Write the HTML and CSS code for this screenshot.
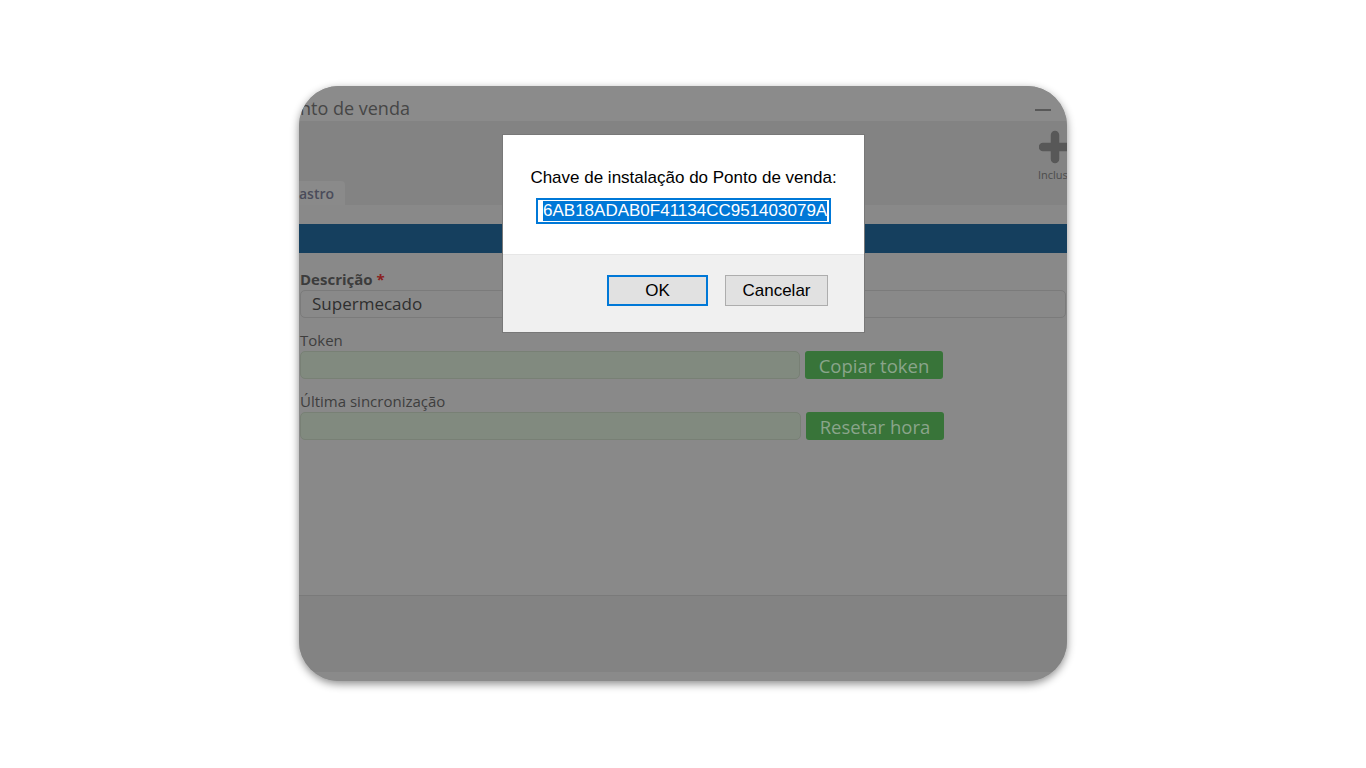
FILE: index.html
```html
<!DOCTYPE html>
<html lang="pt">
<head>
<meta charset="utf-8">
<title>Ponto de venda</title>
<link rel="stylesheet" href="styles.css">
</head>
<body>
<div class="stage">
  <div class="card">
    <div class="titlebar">
      <span class="title">nto de venda</span>
      <span class="minimize"></span>
    </div>
    <div class="toolbar">
      <div class="tab">astro</div>
      <div class="tool">
        <svg class="plus" width="30" height="34" viewBox="0 0 30 34">
          <path d="M16 5 V29 M4 17 H28" stroke="#585858" stroke-width="8.5" stroke-linecap="round" fill="none"/>
        </svg>
        <span class="tool-label">Inclus</span>
      </div>
    </div>
    <div class="panel">
      <div class="bluebar"></div>
      <div class="form">
        <div class="label label-bold">Descrição <span class="req">*</span></div>
        <div class="input">Supermecado</div>

        <div class="label label-gap">Token</div>
        <div class="row">
          <div class="input input-green"></div>
          <div class="btn-green">Copiar token</div>
        </div>

        <div class="label label-gap">Última sincronização</div>
        <div class="row">
          <div class="input input-green input-wide"></div>
          <div class="btn-green">Resetar hora</div>
        </div>
      </div>
    </div>
    <div class="footer"></div>
    <div class="footer-strip"></div>

    <div class="dialog">
      <div class="dialog-body">
        <div class="dialog-text">Chave de instalação do Ponto de venda:</div>
        <div class="dialog-input"><span class="selected">6AB18ADAB0F41134CC951403079A</span></div>
      </div>
      <div class="dialog-actions">
        <div class="dbtn dbtn-default">OK</div>
        <div class="dbtn">Cancelar</div>
      </div>
    </div>
  </div>
</div>
</body>
</html>
```

FILE: styles.css
```css
* { box-sizing: border-box; }
html, body {
  margin: 0;
  padding: 0;
  background: #ffffff;
  width: 1366px;
  height: 768px;
  overflow: hidden;
}
.stage {
  padding-top: 86px;
  padding-left: 299px;
}
.card {
  position: relative;
  width: 768px;
  height: 595px;
  border-radius: 40px;
  overflow: hidden;
  display: flex;
  flex-direction: column;
  box-shadow: 0 3px 8px rgba(0,0,0,0.45);
  font-family: "Open Sans", "DejaVu Sans", sans-serif;
  background: #898989;
}
.titlebar {
  height: 35px;
  flex: none;
  background: #8b8b8b;
  display: flex;
  align-items: center;
  justify-content: space-between;
  padding-left: 1px;
  padding-right: 16px;
}
.title {
  font-size: 18px;
  color: #464646;
  line-height: 24px;
  padding-top: 8px;
}
.minimize {
  width: 16px;
  height: 2px;
  background: #585858;
  margin-top: 12px;
}
.toolbar {
  height: 84px;
  flex: none;
  background: #838383;
  display: flex;
  justify-content: space-between;
  align-items: flex-end;
}
.tab {
  width: 46px;
  height: 24px;
  background: #8a8a8a;
  border-top-right-radius: 4px;
  font-size: 14px;
  font-weight: 600;
  color: #4a4c5a;
  line-height: 25px;
}
.tool {
  align-self: flex-start;
  width: 29px;
  padding-top: 9px;
  display: flex;
  flex-direction: column;
  align-items: flex-start;
}
.plus {
  display: block;
  margin-left: 1px;
}
.tool-label {
  font-size: 11px;
  color: #4c4c4c;
  line-height: 14px;
  margin-top: 4px;
  white-space: nowrap;
}
.panel {
  height: 390px;
  flex: none;
  background: #898989;
  padding-top: 19px;
}
.bluebar {
  height: 29px;
  background: #153f5e;
}
.form {
  padding: 17px 1px 0 1px;
  display: flex;
  flex-direction: column;
}
.label {
  font-size: 15px;
  line-height: 18px;
  color: #3e3e3e;
  margin-bottom: 2px;
}
.label-bold {
  font-weight: 700;
  color: #3c3c3c;
  padding-top: 1px;
  line-height: 17px;
}
.label-gap { margin-top: 13px; }
.req { color: #8a2020; }
.input {
  height: 28px;
  border: 1px solid #7b7b7b;
  border-radius: 5px;
  background: #898989;
  font-size: 17px;
  line-height: 26px;
  color: #2f2f2f;
  padding-left: 11px;
}
.row {
  display: flex;
  gap: 5px;
}
.input-green {
  width: 500px;
  background: #818a7f;
  border-color: #788075;
}
.input-wide { width: 501px; }
.btn-green {
  width: 138px;
  height: 28px;
  background: #387439;
  border-radius: 3px;
  color: #8aa58b;
  font-size: 18.5px;
  line-height: 30px;
  text-align: center;
}
.footer {
  flex: none;
  height: 77px;
  border-top: 1px solid #7a7a7a;
  background: #838383;
}
.footer-strip {
  flex: none;
  height: 9px;
  background: #8a8a8a;
}
.dialog {
  position: absolute;
  left: 203px;
  top: 48px;
  width: 363px;
  height: 199px;
  border: 1px solid #787878;
  background: #f0f0f0;
  display: flex;
  flex-direction: column;
  font-family: "Liberation Sans", Arial, sans-serif;
}
.dialog-body {
  height: 119px;
  background: #ffffff;
  padding-top: 34px;
  display: flex;
  flex-direction: column;
  align-items: center;
}
.dialog-text {
  font-size: 17px;
  line-height: 18px;
  color: #000;
}
.dialog-input {
  margin-top: 11px;
  width: 295px;
  height: 26px;
  border: 2px solid #0078d7;
  background: #fff;
  padding: 1px 0 0 5px;
  overflow: hidden;
  white-space: nowrap;
}
.selected {
  display: inline-block;
  background: #0078d7;
  color: #ffffff;
  font-size: 17px;
  line-height: 20px;
}
.dialog-actions {
  flex: 1;
  border-top: 1px solid #e6e6e6;
  display: flex;
  justify-content: flex-end;
  gap: 17px;
  padding: 20px 36px 0 0;
}
.dbtn {
  width: 103px;
  height: 31px;
  border: 1px solid #adadad;
  background: #e1e1e1;
  font-size: 17px;
  line-height: 29px;
  text-align: center;
  color: #000;
}
.dbtn-default {
  width: 101px;
  border: 2px solid #0078d7;
  line-height: 27px;
}
```
